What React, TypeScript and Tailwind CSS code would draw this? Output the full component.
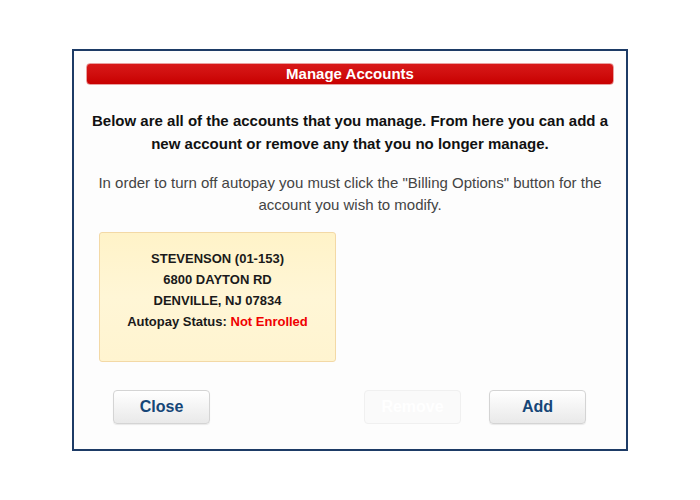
import React from "react";

export default function App() {
  const btn =
    "w-[97px] h-[34px] rounded-[4px] border border-[#d4d4d4] bg-gradient-to-b from-[#ffffff] to-[#e9e9e9] text-[16px] font-bold text-[#164677] shadow-[0_1px_1px_rgba(0,0,0,0.08)]";
  return (
    <div
      className="w-[700px] h-[500px] bg-white pt-[49px] pl-[72px]"
      style={{ fontFamily: '"Liberation Sans", Arial, sans-serif' }}
    >
      <div className="w-[556px] h-[402px] border-2 border-[#1d3b66] bg-[#fdfdfd] flex flex-col px-[12px] pt-[12px]">
        <div className="h-[22px] rounded-[4px] bg-gradient-to-b from-[#d81818] to-[#c80000] border border-[#e9a0a0] flex items-center justify-center text-white font-bold text-[15px]">
          Manage Accounts
        </div>
        <p className="mt-[24px] text-center font-bold text-[15px] leading-[23px] text-[#111]">
          Below are all of the accounts that you manage. From here you can add a
          <br />
          new account or remove any that you no longer manage.
        </p>
        <p className="mt-[17px] text-center text-[15px] leading-[22px] text-[#444]">
          In order to turn off autopay you must click the "Billing Options" button for the
          <br />
          account you wish to modify.
        </p>
        <div className="ml-[13px] mt-[16px] w-[237px] h-[130px] rounded-[3px] border border-[#f3d9a6] bg-gradient-to-b from-[#fff3c8] via-[#fff6d6] to-[#fff4d0] pt-[15px] flex flex-col items-center text-[13px] font-bold leading-[21px] text-[#1a1a1a]">
          <div>STEVENSON (01-153)</div>
          <div>6800 DAYTON RD</div>
          <div>DENVILLE, NJ 07834</div>
          <div>
            Autopay Status: <span className="text-[#f00000]">Not Enrolled</span>
          </div>
        </div>
        <div className="mt-[28px] flex items-center pl-[27px] pr-[28px]">
          <button className={btn}>Close</button>
          <div className="flex-1" />
          <button className="w-[97px] h-[34px] rounded-[4px] border border-[#f0f0f0] bg-[#fafafa] text-[16px] font-bold text-white">
            Remove
          </button>
          <button className={btn + " ml-[28px]"}>Add</button>
        </div>
      </div>
    </div>
  );
}
